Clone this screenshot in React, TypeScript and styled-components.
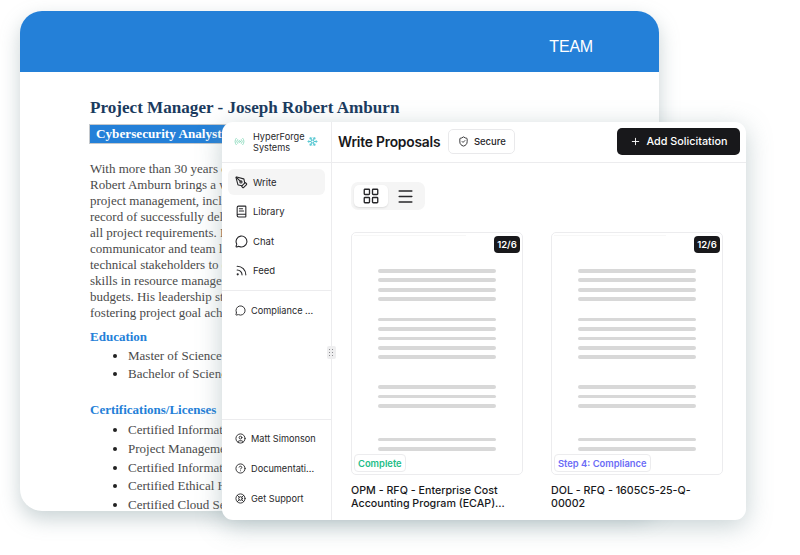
import React from 'react'
import styled, { createGlobalStyle } from 'styled-components'
import {
  BookText,
  CircleHelp,
  CircleUser,
  LayoutGrid,
  LifeBuoy,
  Menu,
  MessageCircle,
  PenTool,
  Plus,
  Radio,
  Rss,
  ShieldCheck,
  Snowflake,
} from 'lucide-react'

const GlobalStyle = createGlobalStyle`
  html, body {
    margin: 0;
    padding: 0;
    background: #fff;
  }
`

const Stage = styled.div`
  position: relative;
  width: 800px;
  height: 555px;
  overflow: hidden;
  background: #fff;
`

const DocWindow = styled.div`
  position: absolute;
  left: 20px;
  top: 11px;
  width: 639px;
  height: 500px;
  border-radius: 22px;
  overflow: hidden;
  background: #fff;
  box-shadow: 0 8px 20px rgba(120, 145, 150, 0.4);
`

const DocBanner = styled.div`
  height: 61px;
  box-sizing: border-box;
  padding: 10px 66px 0 0;
  background: #2480d8;
  display: flex;
  align-items: center;
  justify-content: flex-end;
  color: #fff;
  font: 16px 'Liberation Sans', sans-serif;
  letter-spacing: -0.2px;
`

const DocBody = styled.div`
  padding: 25px 0 0 70px;
  font-family: 'Liberation Serif', serif;
  white-space: nowrap;
`

const DocTitle = styled.h1`
  margin: 0;
  font-size: 17.1px;
  line-height: 21px;
  font-weight: bold;
  color: #1a3a5e;
`

const DocRole = styled.div`
  margin-top: 7px;
  width: 300px;
  height: 18px;
  line-height: 18px;
  padding-left: 6px;
  background: #2480d8;
  outline: 1px solid #c4c8cc;
  color: #fff;
  font-size: 13.2px;
  font-weight: bold;
`

const DocParagraph = styled.p`
  margin: 18px 0 0;
  font-size: 13px;
  line-height: 15.95px;
  color: #4a4a4a;
`

const DocLine = styled.span`
  display: block;
`

const DocHeading = styled.h2<{ $gap: number }>`
  margin: ${(p) => p.$gap}px 0 0;
  font-size: 13px;
  line-height: 16px;
  font-weight: bold;
  color: #2480d8;
`

const DocList = styled.ul<{ $top: number }>`
  margin: ${(p) => p.$top}px 0 0;
  padding: 0 0 0 38px;
  font-size: 13px;
  line-height: 18.75px;
  color: #4a4a4a;

  li::marker {
    color: #222;
  }
`

const AppWindow = styled.div`
  position: absolute;
  left: 222px;
  top: 122px;
  width: 524px;
  height: 398px;
  display: flex;
  border-radius: 11px;
  overflow: hidden;
  background: #fff;
  font-family: Inter, 'Liberation Sans', sans-serif;
  color: #18181b;
  box-shadow: 0 6px 26px rgba(120, 145, 150, 0.42);
`

const Sidebar = styled.aside`
  position: relative;
  flex: 0 0 110px;
  display: flex;
  flex-direction: column;
  border-right: 1px solid #ececee;
  box-sizing: border-box;
`

const Brand = styled.div`
  height: 41px;
  flex: none;
  box-sizing: border-box;
  display: flex;
  align-items: center;
  padding: 0 13px 1px 12px;
  border-bottom: 1px solid #ececee;
`

const BrandName = styled.div`
  margin-left: 8px;
  flex: 1;
  font-size: 9.2px;
  line-height: 11px;
  font-weight: 400;
  color: #27272a;
`

const NavGroup = styled.div<{ $grow?: boolean }>`
  display: flex;
  flex-direction: column;
  gap: 3.6px;
  padding: 6px;
  flex: ${(p) => (p.$grow ? 1 : 'none')};
  border-bottom: 1px solid #ececee;

  & + & {
    padding-top: 7px;
  }
`

const NavFooter = styled.div`
  flex: none;
  display: flex;
  flex-direction: column;
  gap: 3.6px;
  padding: 6px 6px 9px;
`

const NavItem = styled.div<{ $active?: boolean; $small?: boolean }>`
  height: 26px;
  flex: none;
  display: flex;
  align-items: center;
  gap: 5px;
  padding-left: 7px;
  border-radius: 6px;
  background: ${(p) => (p.$active ? '#f5f5f5' : 'transparent')};
  font-size: ${(p) => (p.$small ? 9.2 : 9.5)}px;
  font-weight: 400;
  color: #27272a;
  white-space: nowrap;

  svg {
    flex: none;
  }
`

const ResizeHandle = styled.div`
  position: absolute;
  top: 224px;
  right: -5px;
  width: 9px;
  height: 13px;
  border-radius: 2px;
  background: #eeeeef;
  display: grid;
  grid-template-columns: repeat(2, 2px);
  grid-auto-rows: 2px;
  gap: 1px 1px;
  place-content: center;
  z-index: 1;

  span {
    background: #8b8b90;
    width: 1px;
    height: 1px;
  }
`

const Main = styled.main`
  flex: 1;
  min-width: 0;
  display: flex;
  flex-direction: column;
`

const TopBar = styled.header`
  height: 41px;
  flex: none;
  box-sizing: border-box;
  display: flex;
  align-items: center;
  padding: 0 6px 1px 6px;
  border-bottom: 1px solid #ececee;
`

const PageTitle = styled.h2`
  margin: 0;
  font-size: 13.8px;
  font-weight: 600;
  letter-spacing: -0.2px;
  color: #18181b;
`

const SecureChip = styled.div`
  margin-left: 8px;
  width: 67px;
  height: 25px;
  box-sizing: border-box;
  display: flex;
  align-items: center;
  justify-content: center;
  gap: 5px;
  border: 1px solid #e9e9eb;
  border-radius: 5px;
  font-size: 9.5px;
  font-weight: 500;
  color: #27272a;
`

const AddButton = styled.button`
  margin-left: auto;
  width: 123px;
  height: 27px;
  border: none;
  padding: 0;
  display: flex;
  align-items: center;
  justify-content: center;
  gap: 6px;
  border-radius: 5px;
  background: #18181b;
  color: #fff;
  font-family: inherit;
  font-size: 10.8px;
  font-weight: 500;
`

const Content = styled.div`
  flex: 1;
  padding: 19px 0 0 19px;
`

const ViewToggle = styled.div`
  width: 74px;
  height: 28px;
  box-sizing: border-box;
  padding: 3px;
  display: flex;
  border-radius: 7px;
  background: #f5f5f5;
`

const ViewOption = styled.div<{ $active?: boolean }>`
  width: 34px;
  display: flex;
  align-items: center;
  justify-content: center;
  border-radius: 5px;
  color: #27272a;
  background: ${(p) => (p.$active ? '#fff' : 'transparent')};
  box-shadow: ${(p) => (p.$active ? '0 1px 2px rgba(0, 0, 0, 0.1)' : 'none')};
`

const CardGrid = styled.div`
  margin-top: 22px;
  display: grid;
  grid-template-columns: repeat(2, 172px);
  column-gap: 28px;
`

const Card = styled.article``

const Thumb = styled.div`
  position: relative;
  height: 243px;
  box-sizing: border-box;
  border: 1px solid #ececee;
  border-radius: 5px;
  padding: 36px 26px 0;
  background: #fff;

  &::before {
    content: '';
    position: absolute;
    left: 2px;
    top: 2px;
    width: 112px;
    height: 1px;
    background: #f7f7f7;
  }
`

const DateBadge = styled.div`
  position: absolute;
  top: 3px;
  right: 2px;
  width: 26px;
  height: 17px;
  display: flex;
  align-items: center;
  justify-content: center;
  border-radius: 4px;
  background: #18181b;
  color: #fff;
  font-size: 9.5px;
  font-weight: 600;
`

const LineGroup = styled.div<{ $gap: number }>`
  display: flex;
  flex-direction: column;
  gap: 5.9px;
  margin-bottom: ${(p) => p.$gap}px;
`

const SkeletonLine = styled.div`
  height: 3.6px;
  border-radius: 2px;
  background: #d8d8d8;
`

const StatusTag = styled.div<{ $tone: string }>`
  position: absolute;
  left: 2px;
  bottom: 2px;
  height: 18px;
  box-sizing: border-box;
  padding: 0 3px;
  display: flex;
  align-items: center;
  border: 1px solid #ececee;
  border-radius: 4px;
  background: #fff;
  color: ${(p) => p.$tone};
  font-size: 9.4px;
  font-weight: 600;
  white-space: nowrap;
`

const CardTitle = styled.div`
  margin-top: 9px;
  font-size: 10.7px;
  line-height: 13px;
  font-weight: 500;
  color: #18181b;
`

const lineGroups = [
  { count: 4, gap: 16.5 },
  { count: 5, gap: 26 },
  { count: 3, gap: 30 },
  { count: 2, gap: 0 },
]

const PageLines = () => (
  <>
    {lineGroups.map((group, i) => (
      <LineGroup key={i} $gap={group.gap}>
        {Array.from({ length: group.count }).map((_, j) => (
          <SkeletonLine key={j} />
        ))}
      </LineGroup>
    ))}
  </>
)

const summary = [
  'With more than 30 years of',
  'Robert Amburn brings a wide',
  'project management, including',
  'record of successfully deli',
  'all project requirements. He',
  'communicator and team leader',
  'technical stakeholders to ensure',
  'skills in resource management',
  'budgets. His leadership style',
  'fostering project goal achieving',
]

const certifications = [
  'Certified Information',
  'Project Management',
  'Certified Information',
  'Certified Ethical Hacker',
  'Certified Cloud Security',
]

const App = () => {
  return (
    <Stage>
      <GlobalStyle />
      <DocWindow>
        <DocBanner>TEAM</DocBanner>
        <DocBody>
          <DocTitle>Project Manager - Joseph Robert Amburn</DocTitle>
          <DocRole>Cybersecurity Analyst</DocRole>
          <DocParagraph>
            {summary.map((line) => (
              <DocLine key={line}>{line}</DocLine>
            ))}
          </DocParagraph>
          <DocHeading $gap={8}>Education</DocHeading>
          <DocList $top={2}>
            <li>Master of Science</li>
            <li>Bachelor of Science</li>
          </DocList>
          <DocHeading $gap={18}>Certifications/Licenses</DocHeading>
          <DocList $top={3}>
            {certifications.map((line, i) => (
              <li key={i}>{line}</li>
            ))}
          </DocList>
        </DocBody>
      </DocWindow>

      <AppWindow>
        <Sidebar>
          <Brand>
            <Radio size={11} color="#8fdcc0" />
            <BrandName>
              HyperForge
              <br />
              Systems
            </BrandName>
            <Snowflake size={11} color="#4cc4cf" />
          </Brand>
          <NavGroup>
            <NavItem $active>
              <PenTool size={13} />
              Write
            </NavItem>
            <NavItem>
              <BookText size={13} />
              Library
            </NavItem>
            <NavItem>
              <MessageCircle size={13} />
              Chat
            </NavItem>
            <NavItem>
              <Rss size={13} />
              Feed
            </NavItem>
          </NavGroup>
          <NavGroup $grow>
            <NavItem $small>
              <MessageCircle size={11} />
              Compliance ...
            </NavItem>
          </NavGroup>
          <NavFooter>
            <NavItem $small>
              <CircleUser size={11} />
              Matt Simonson
            </NavItem>
            <NavItem $small>
              <CircleHelp size={11} />
              Documentati...
            </NavItem>
            <NavItem $small>
              <LifeBuoy size={11} />
              Get Support
            </NavItem>
          </NavFooter>
          <ResizeHandle>
            {Array.from({ length: 6 }).map((_, i) => (
              <span key={i} />
            ))}
          </ResizeHandle>
        </Sidebar>

        <Main>
          <TopBar>
            <PageTitle>Write Proposals</PageTitle>
            <SecureChip>
              <ShieldCheck size={11} />
              Secure
            </SecureChip>
            <AddButton>
              <Plus size={11} />
              Add Solicitation
            </AddButton>
          </TopBar>
          <Content>
            <ViewToggle>
              <ViewOption $active>
                <LayoutGrid size={18} strokeWidth={1.8} />
              </ViewOption>
              <ViewOption>
                <Menu size={19} strokeWidth={1.8} />
              </ViewOption>
            </ViewToggle>
            <CardGrid>
              <Card>
                <Thumb>
                  <DateBadge>12/6</DateBadge>
                  <PageLines />
                  <StatusTag $tone="#22bd87">Complete</StatusTag>
                </Thumb>
                <CardTitle>
                  OPM - RFQ - Enterprise Cost
                  <br />
                  Accounting Program (ECAP)...
                </CardTitle>
              </Card>
              <Card>
                <Thumb>
                  <DateBadge>12/6</DateBadge>
                  <PageLines />
                  <StatusTag $tone="#6b6cf6">Step 4: Compliance</StatusTag>
                </Thumb>
                <CardTitle>
                  DOL - RFQ - 1605C5-25-Q-
                  <br />
                  00002
                </CardTitle>
              </Card>
            </CardGrid>
          </Content>
        </Main>
      </AppWindow>
    </Stage>
  )
}

export default App
